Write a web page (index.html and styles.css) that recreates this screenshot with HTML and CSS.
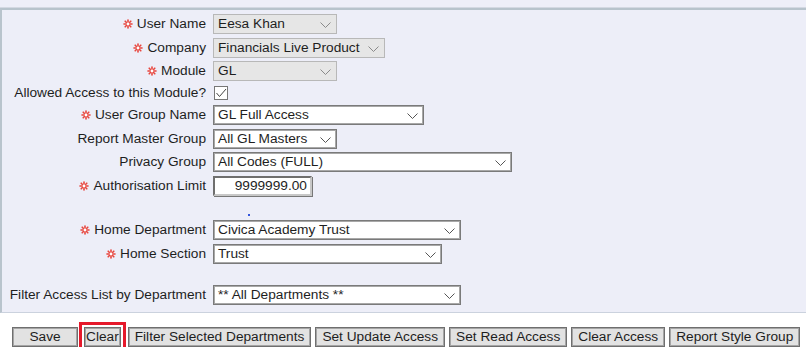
FILE: index.html
```html
<!DOCTYPE html>
<html>
<head>
<meta charset="utf-8">
<link rel="stylesheet" href="styles.css">
</head>
<body>
<div class="top"></div>
<div class="panel">
  <div class="form">
    <label class="lbl req"><svg class="star" viewBox="0 0 10 10"><g stroke="#e8463e" stroke-width="1.6" stroke-linecap="round"><line x1="5" y1="1" x2="5" y2="9"/><line x1="1" y1="5" x2="9" y2="5"/><line x1="2.2" y1="2.2" x2="7.8" y2="7.8"/><line x1="7.8" y1="2.2" x2="2.2" y2="7.8"/></g><circle cx="5" cy="5" r="1.4" fill="#fff"/></svg>User Name</label>
    <div class="ctl"><div class="sel dis w124"><span>Eesa Khan</span><svg class="chev" viewBox="0 0 11 6"><polyline points="0.5,0.5 5.5,5.5 10.5,0.5" fill="none" stroke="#8a8a8a"/></svg></div></div>

    <label class="lbl req"><svg class="star" viewBox="0 0 10 10"><g stroke="#e8463e" stroke-width="1.6" stroke-linecap="round"><line x1="5" y1="1" x2="5" y2="9"/><line x1="1" y1="5" x2="9" y2="5"/><line x1="2.2" y1="2.2" x2="7.8" y2="7.8"/><line x1="7.8" y1="2.2" x2="2.2" y2="7.8"/></g><circle cx="5" cy="5" r="1.4" fill="#fff"/></svg>Company</label>
    <div class="ctl"><div class="sel dis w172"><span>Financials Live Product</span><svg class="chev" viewBox="0 0 11 6"><polyline points="0.5,0.5 5.5,5.5 10.5,0.5" fill="none" stroke="#8a8a8a"/></svg></div></div>

    <label class="lbl req"><svg class="star" viewBox="0 0 10 10"><g stroke="#e8463e" stroke-width="1.6" stroke-linecap="round"><line x1="5" y1="1" x2="5" y2="9"/><line x1="1" y1="5" x2="9" y2="5"/><line x1="2.2" y1="2.2" x2="7.8" y2="7.8"/><line x1="7.8" y1="2.2" x2="2.2" y2="7.8"/></g><circle cx="5" cy="5" r="1.4" fill="#fff"/></svg>Module</label>
    <div class="ctl"><div class="sel dis w124"><span>GL</span><svg class="chev" viewBox="0 0 11 6"><polyline points="0.5,0.5 5.5,5.5 10.5,0.5" fill="none" stroke="#8a8a8a"/></svg></div></div>

    <label class="lbl">Allowed Access to this Module?</label>
    <div class="ctl"><span class="check"><svg viewBox="0 0 12 12"><polyline points="1.5,6 4.5,9.5 11,2" fill="none" stroke="#444" stroke-width="1"/></svg></span></div>

    <label class="lbl req"><svg class="star" viewBox="0 0 10 10"><g stroke="#e8463e" stroke-width="1.6" stroke-linecap="round"><line x1="5" y1="1" x2="5" y2="9"/><line x1="1" y1="5" x2="9" y2="5"/><line x1="2.2" y1="2.2" x2="7.8" y2="7.8"/><line x1="7.8" y1="2.2" x2="2.2" y2="7.8"/></g><circle cx="5" cy="5" r="1.4" fill="#fff"/></svg>User Group Name</label>
    <div class="ctl"><div class="sel w211"><span>GL Full Access</span><svg class="chev" viewBox="0 0 11 6"><polyline points="0.5,0.5 5.5,5.5 10.5,0.5" fill="none" stroke="#555"/></svg></div></div>

    <label class="lbl">Report Master Group</label>
    <div class="ctl"><div class="sel w124"><span>All GL Masters</span><svg class="chev" viewBox="0 0 11 6"><polyline points="0.5,0.5 5.5,5.5 10.5,0.5" fill="none" stroke="#555"/></svg></div></div>

    <label class="lbl">Privacy Group</label>
    <div class="ctl"><div class="sel w299"><span>All Codes (FULL)</span><svg class="chev" viewBox="0 0 11 6"><polyline points="0.5,0.5 5.5,5.5 10.5,0.5" fill="none" stroke="#555"/></svg></div></div>

    <label class="lbl req"><svg class="star" viewBox="0 0 10 10"><g stroke="#e8463e" stroke-width="1.6" stroke-linecap="round"><line x1="5" y1="1" x2="5" y2="9"/><line x1="1" y1="5" x2="9" y2="5"/><line x1="2.2" y1="2.2" x2="7.8" y2="7.8"/><line x1="7.8" y1="2.2" x2="2.2" y2="7.8"/></g><circle cx="5" cy="5" r="1.4" fill="#fff"/></svg>Authorisation Limit</label>
    <div class="ctl"><div class="num">9999999.00</div></div>

    <span class="lbl"></span>
    <div class="ctl"><span class="dot"></span></div>

    <label class="lbl req"><svg class="star" viewBox="0 0 10 10"><g stroke="#e8463e" stroke-width="1.6" stroke-linecap="round"><line x1="5" y1="1" x2="5" y2="9"/><line x1="1" y1="5" x2="9" y2="5"/><line x1="2.2" y1="2.2" x2="7.8" y2="7.8"/><line x1="7.8" y1="2.2" x2="2.2" y2="7.8"/></g><circle cx="5" cy="5" r="1.4" fill="#fff"/></svg>Home Department</label>
    <div class="ctl"><div class="sel w248"><span>Civica Academy Trust</span><svg class="chev" viewBox="0 0 11 6"><polyline points="0.5,0.5 5.5,5.5 10.5,0.5" fill="none" stroke="#555"/></svg></div></div>

    <label class="lbl req"><svg class="star" viewBox="0 0 10 10"><g stroke="#e8463e" stroke-width="1.6" stroke-linecap="round"><line x1="5" y1="1" x2="5" y2="9"/><line x1="1" y1="5" x2="9" y2="5"/><line x1="2.2" y1="2.2" x2="7.8" y2="7.8"/><line x1="7.8" y1="2.2" x2="2.2" y2="7.8"/></g><circle cx="5" cy="5" r="1.4" fill="#fff"/></svg>Home Section</label>
    <div class="ctl"><div class="sel w229"><span>Trust</span><svg class="chev" viewBox="0 0 11 6"><polyline points="0.5,0.5 5.5,5.5 10.5,0.5" fill="none" stroke="#555"/></svg></div></div>

    <span class="lbl"></span>
    <span class="ctl"></span>

    <label class="lbl">Filter Access List by Department</label>
    <div class="ctl"><div class="sel w248"><span>** All Departments **</span><svg class="chev" viewBox="0 0 11 6"><polyline points="0.5,0.5 5.5,5.5 10.5,0.5" fill="none" stroke="#555"/></svg></div></div>
  </div>
</div>
<div class="buttons">
  <button class="btn save">Save</button>
  <button class="btn clear">Clear</button>
  <button class="btn">Filter Selected Departments</button>
  <button class="btn">Set Update Access</button>
  <button class="btn">Set Read Access</button>
  <button class="btn">Clear Access</button>
  <button class="btn">Report Style Group</button>
</div>
</body>
</html>
```
FILE: styles.css
```css
html, body {
  margin: 0;
  padding: 0;
  background: #ffffff;
  font-family: "Liberation Sans", Arial, sans-serif;
  font-size: 13.7px;
  color: #1e1e1e;
}
.top {
  height: 7px;
  background: #edeef8;
  border-bottom: 1px solid #d3d8e2;
}
.panel {
  background: #edeef8;
  border-top: 2px solid #b7c3cc;
  border-left: 2px solid #b9c4cd;
  border-bottom: 1px solid #cbd2de;
  padding: 4px 0 7px 0;
}
.form {
  display: grid;
  grid-template-columns: 204px 1fr;
  column-gap: 7px;
  row-gap: 3.5px;
  grid-template-rows: 20px 20px 20px 17px 20px 20px 20px 20px 17.5px 20px 20px 14.5px 20px;
}
.lbl {
  display: flex;
  align-items: center;
  justify-content: flex-end;
  white-space: nowrap;
  line-height: 20px;
}
.star {
  width: 10px;
  height: 10px;
  margin-right: 4px;
}
.ctl {
  display: flex;
  align-items: center;
  position: relative;
}
.sel {
  position: relative;
  box-sizing: border-box;
  height: 20px;
  background: #fff;
  border: 1px solid #7a7a7a;
  box-shadow: inset 0 0 0 1px #a8a8a8;
  padding-left: 4px;
  line-height: 18px;
  white-space: nowrap;
  overflow: hidden;
}
.sel.dis {
  background: #e6e6e6;
  border-color: #b8b8b8;
  box-shadow: none;
}
.chev {
  position: absolute;
  right: 5px;
  top: 7px;
  width: 11px;
  height: 6px;
}
.w124 { width: 124px; }
.w172 { width: 172px; }
.w211 { width: 211px; }
.w299 { width: 299px; }
.w248 { width: 248px; }
.w229 { width: 229px; }
.check {
  box-sizing: border-box;
  width: 14px;
  height: 14px;
  margin-left: 1px;
  border: 1px solid #777;
  background: #fff;
  display: flex;
}
.check svg {
  width: 12px;
  height: 12px;
}
.num {
  box-sizing: border-box;
  width: 99px;
  height: 20px;
  background: #fff;
  border: 2px solid #6e6e6e;
  border-right-color: #c8c8c8;
  border-bottom-color: #c8c8c8;
  box-shadow: 1px 1px 0 #777;
  text-align: right;
  padding-right: 3px;
  line-height: 16px;
}
.dot {
  width: 2px;
  height: 2px;
  background: #3355dd;
  margin-left: 35px;
  align-self: flex-end;
  margin-bottom: 1px;
}
.buttons {
  display: flex;
  align-items: center;
  gap: 4px;
  padding: 14px 0 0 12px;
}
.btn {
  box-sizing: border-box;
  height: 20px;
  margin: 0;
  padding: 0 6px;
  font-family: "Liberation Sans", Arial, sans-serif;
  font-size: 13.7px;
  color: #1e1e1e;
  background: #e2e2e2;
  border: 1px solid #6f6f6f;
  box-shadow: inset 0 0 0 1px #a5a5a5;
  line-height: 16px;
}
.save {
  width: 66px;
}
.clear {
  padding: 0 1px;
  margin-left: 2px;
  margin-right: 3px;
  outline: 3px solid #e5192b;
  outline-offset: 2px;
}
```
